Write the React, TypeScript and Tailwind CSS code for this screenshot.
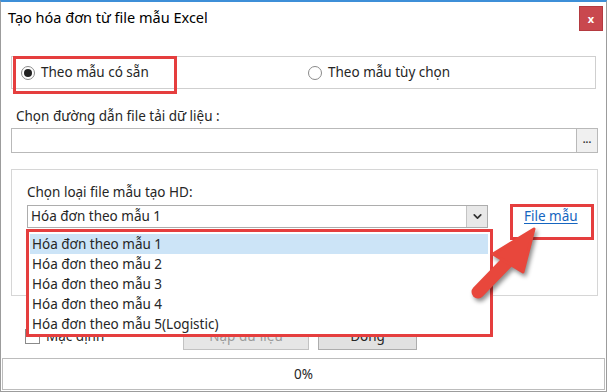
import React from 'react'
import { ChevronDown } from 'lucide-react'

const items = [
  'Hóa đơn theo mẫu 1',
  'Hóa đơn theo mẫu 2',
  'Hóa đơn theo mẫu 3',
  'Hóa đơn theo mẫu 4',
  'Hóa đơn theo mẫu 5(Logistic)',
]

const Radio = ({ checked, label }: { checked?: boolean; label: string }) => (
  <div className="flex items-center gap-[6px]">
    <span className="w-[14px] h-[14px] rounded-full border border-[#8a8a8a] bg-white flex items-center justify-center">
      {checked && <span className="w-[8px] h-[8px] rounded-full bg-[#222]" />}
    </span>
    <span>{label}</span>
  </div>
)

const App = () => {
  return (
    <div
      className="relative w-[607px] h-[392px] bg-white border-x border-b border-[#9c9c9c] border-t-2 border-t-[#3d8fd8] text-[13.5px] text-[#262626] overflow-hidden"
      style={{ fontFamily: '"Noto Sans", "Open Sans", sans-serif' }}
    >
      {/* title bar */}
      <div className="h-[32px] flex items-center justify-between pl-[7px] pr-[3px]">
        <span className="text-[14.5px] text-black">Tạo hóa đơn từ file mẫu Excel</span>
        <button className="w-[24px] h-[25px] bg-[#c9484e] border border-[#b43a40] text-white text-[11px] font-bold leading-none flex items-center justify-center">
          x
        </button>
      </div>

      <div className="px-[10px]">
        {/* radio group */}
        <div className="mt-[22px] h-[33px] border border-[#cfcfcf] flex items-center">
          <div className="w-[296px] pl-[9px]">
            <Radio checked label="Theo mẫu có sẵn" />
          </div>
          <Radio label="Theo mẫu tùy chọn" />
        </div>

        <div className="mt-[17px] h-[20px] leading-[20px] pl-[5px]">Chọn đường dẫn file tải dữ liệu :</div>
        <div className="mt-[2px] flex h-[25px] w-[587px]">
          <div className="flex-1 border border-[#b9b9b9] bg-white" />
          <button className="w-[21px] border border-l-0 border-[#b9b9b9] bg-[#f0f0f0] text-[10px] font-bold leading-none pb-[4px] text-[#333]">
            ...
          </button>
        </div>

        {/* template group */}
        <div className="mt-[16px] h-[127px] w-[587px] border border-[#d6d6d6] pt-[12px] pl-[15px]">
          <div className="h-[20px] leading-[20px]">Chọn loại file mẫu tạo HD:</div>
          <div className="mt-[3px] flex items-center">
            <div className="w-[461px] h-[23px] border border-[#adadad] flex">
              <div className="flex-1 pl-[3px] leading-[21px]">Hóa đơn theo mẫu 1</div>
              <div className="w-[21px] border-l border-[#c4c4c4] bg-[#e8e8e8] flex items-center justify-center">
                <ChevronDown size={13} strokeWidth={3.2} className="text-[#333]" />
              </div>
            </div>
            <a className="ml-[36px] text-[#1565c0] underline underline-offset-2">File mẫu</a>
          </div>
        </div>

        {/* bottom row */}
        <div className="mt-[26px] h-[28px] flex items-center">
          <div className="flex items-center gap-[6px] pl-[14px] w-[172px]">
            <span className="w-[15px] h-[15px] border border-[#8a8a8a] bg-white" />
            <span>Mặc định</span>
          </div>
          <button className="w-[126px] h-[28px] border border-[#c2c2c2] bg-[#e6e6e6] text-[#9a9a9a]">Nạp dữ liệu</button>
          <button className="ml-[9px] w-[99px] h-[28px] border border-[#adadad] bg-[#e1e1e1]">Đóng</button>
        </div>
      </div>

      {/* progress bar */}
      <div className="mt-[8px] mx-[1px] h-[32px] border border-[#bcbcbc] flex items-center justify-center">0%</div>

      {/* open dropdown list */}
      <div className="absolute left-[25px] top-[227px] w-[467px] h-[108px] border-[3px] border-[#e53e3e] bg-white pt-[2px] pl-[1px] pr-[2px]">
        {items.map((t, i) => (
          <div key={t} className={`h-[20px] leading-[20px] pl-[2px] ${i === 0 ? 'bg-[#cce4f7]' : ''}`}>
            {t}
          </div>
        ))}
      </div>

      {/* annotation boxes */}
      <div className="absolute left-[12px] top-[54px] w-[164px] h-[38px] border-[3px] border-[#e53e3e]" />
      <div className="absolute left-[509px] top-[202px] w-[84px] h-[36px] border-[3px] border-[#e53e3e]" />

      {/* arrow */}
      <svg
        className="absolute left-[460px] top-[220px] drop-shadow-[2px_3px_2px_rgba(0,0,0,0.45)]"
        width="90"
        height="85"
        viewBox="0 0 90 85"
      >
        <line x1="17" y1="70" x2="48" y2="38" stroke="#e8473c" strokeWidth="13" strokeLinecap="round" />
        <polygon
          points="73,7 32,32 62,50"
          fill="#e8473c"
          stroke="#e8473c"
          strokeWidth="3"
          strokeLinejoin="round"
        />
      </svg>
    </div>
  )
}

export default App
